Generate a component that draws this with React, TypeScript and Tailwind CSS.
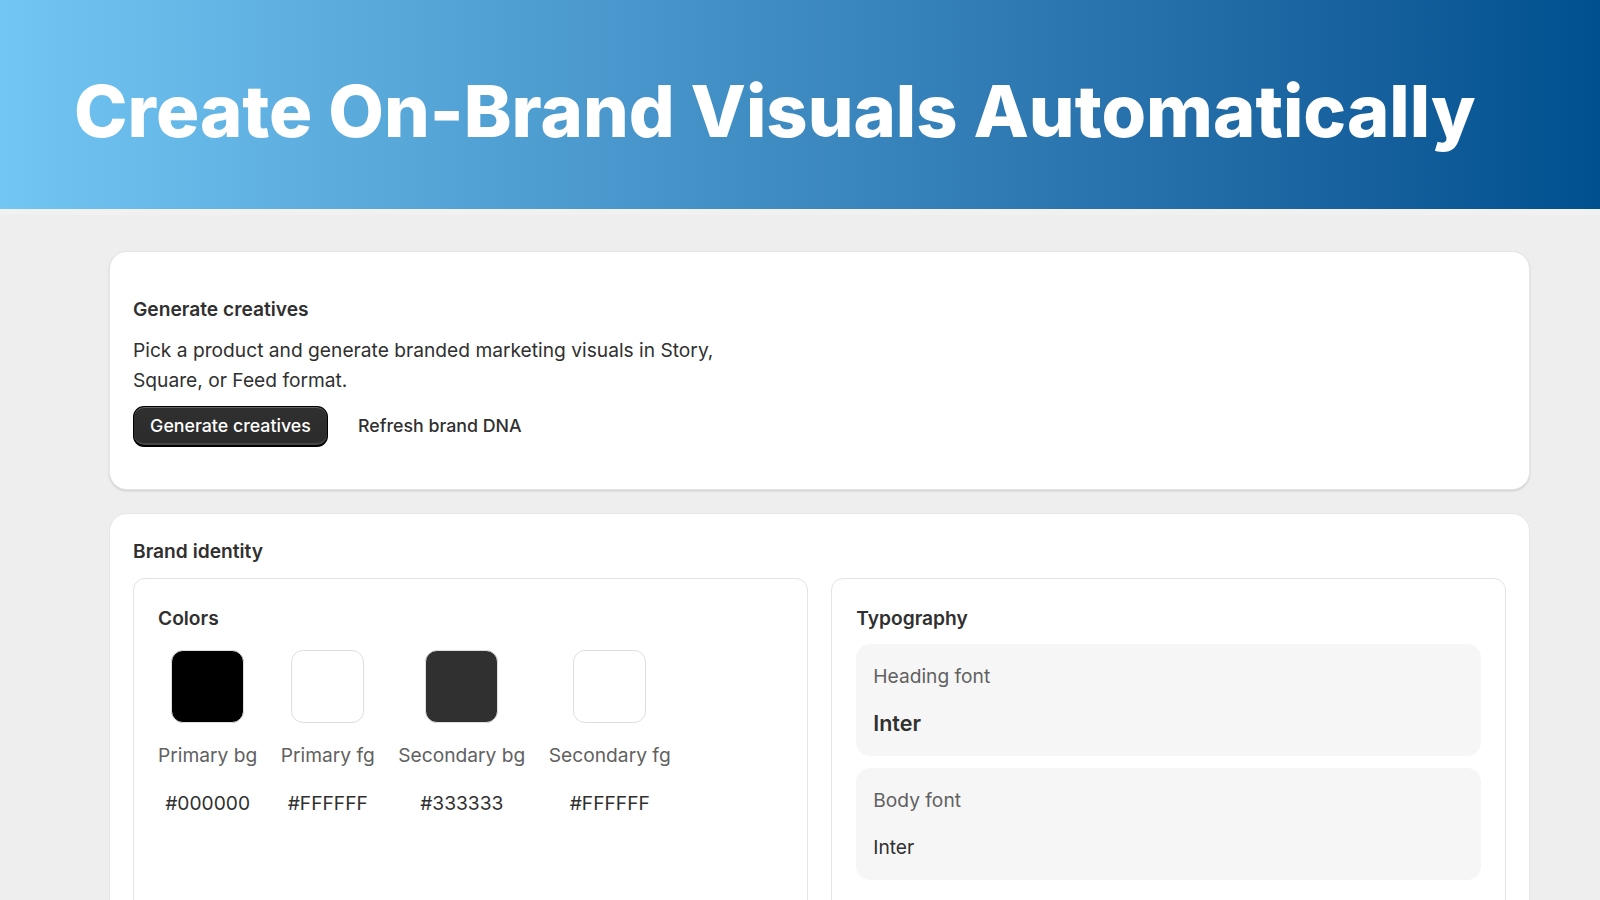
const swatches = [
  { label: "Primary bg", value: "#000000", fill: "bg-black" },
  { label: "Primary fg", value: "#FFFFFF", fill: "bg-white" },
  { label: "Secondary bg", value: "#333333", fill: "bg-[#303030]" },
  { label: "Secondary fg", value: "#FFFFFF", fill: "bg-white" },
];

const fonts = [
  { label: "Heading font", value: "Inter", weight: "font-semibold text-[21.5px]" },
  { label: "Body font", value: "Inter", weight: "font-normal" },
];

const App = () => (
  <div className="h-[900px] overflow-hidden bg-[#eeeeee] font-['Inter',sans-serif] text-[19.2px] leading-[29.5px] text-[#303030]">
    {/* Banner */}
    <header className="flex h-[209px] items-center bg-gradient-to-r from-[#72c6f3] to-[#00508f] pt-[13px] pl-[74px]">
      <h1 className="text-[72.1px] leading-none font-[760] text-white">Create On-Brand Visuals Automatically</h1>
    </header>
    <div className="h-[6px] bg-[#f1f1f1]" />

    <main className="flex flex-col gap-[23px] pt-[36px] pr-[70px] pl-[109px]">
      {/* Generate creatives */}
      <section className="flex h-[239px] flex-col items-start rounded-[18px] border border-[#e6e6e6] bg-white px-[23px] pt-[43px] shadow-[0_1px_2px_rgba(0,0,0,0.15)]">
        <h2 className="font-semibold">Generate creatives</h2>
        <p className="mt-[10px] w-[600px] leading-[30px]">
          Pick a product and generate branded marketing visuals in Story, Square, or Feed format.
        </p>
        <div className="mt-[11px] flex items-center gap-[30px]">
          <button className="h-[41px] w-[195px] rounded-[11px] border border-b-2 border-black bg-gradient-to-b from-[#303030] to-[#2b2b2b] text-[17.8px] font-medium text-white shadow-[inset_0_1px_0_rgba(255,255,255,0.25),inset_0_-2px_0_rgba(255,255,255,0.12)]">
            Generate creatives
          </button>
          <button className="text-[17.8px] font-medium">Refresh brand DNA</button>
        </div>
      </section>

      {/* Brand identity */}
      <section className="rounded-[18px] border border-[#e6e6e6] bg-white pt-[23px] pr-[23px] pb-[24px] pl-[23px]">
        <h2 className="font-semibold">Brand identity</h2>
        <div className="mt-[11px] grid grid-cols-2 gap-[23.5px]">
          <div className="h-[340px] rounded-[12px] border-[1.5px] border-[#e3e3e3] px-[24px] pt-[25px]">
            <h3 className="font-semibold">Colors</h3>
            <div className="mt-[17px] flex gap-[23.5px]">
              {swatches.map((s) => (
                <div key={s.label} className="flex flex-col items-center">
                  <div className={`h-[73px] w-[73px] rounded-[12px] border-[1.5px] border-[#dedede] ${s.fill}`} />
                  <span className="mt-[18px] text-[#616161]">{s.label}</span>
                  <span className="mt-[18px]">{s.value}</span>
                </div>
              ))}
            </div>
          </div>
          <div className="h-[340px] rounded-[12px] border-[1.5px] border-[#e3e3e3] px-[24px] pt-[25px]">
            <h3 className="font-semibold">Typography</h3>
            <div className="mt-[11px] flex flex-col gap-[12px]">
              {fonts.map((f) => (
                <div key={f.label} className="h-[112px] rounded-[14px] bg-[#f6f6f6] px-[17px] pt-[18px]">
                  <div className="text-[#616161]">{f.label}</div>
                  <div className={`mt-[17px] ${f.weight}`}>{f.value}</div>
                </div>
              ))}
            </div>
          </div>
        </div>
      </section>
    </main>
  </div>
);

export default App;
